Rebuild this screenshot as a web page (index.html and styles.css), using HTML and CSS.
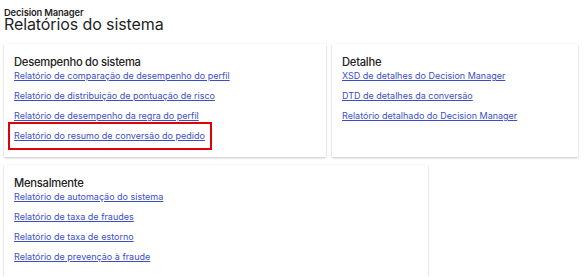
FILE: index.html
```html
<!DOCTYPE html>
<html lang="pt">
<head>
<meta charset="utf-8">
<link rel="stylesheet" href="styles.css">
</head>
<body>
<header class="page-header">
  <div class="app-name">Decision Manager</div>
  <h1 class="page-title">Relatórios do sistema</h1>
</header>
<main class="cards">
  <section class="card card-perf">
    <h2 class="card-title">Desempenho do sistema</h2>
    <ul class="links">
      <li><a href="#">Relatório de comparação de desempenho do perfil</a></li>
      <li><a href="#">Relatório de distribuição de pontuação de risco</a></li>
      <li><a href="#">Relatório de desempenho da regra do perfil</a></li>
      <li class="highlight"><a href="#">Relatório do resumo de conversão do pedido</a></li>
    </ul>
  </section>
  <section class="card card-detail">
    <h2 class="card-title">Detalhe</h2>
    <ul class="links">
      <li><a href="#">XSD de detalhes do Decision Manager</a></li>
      <li><a href="#">DTD de detalhes da conversão</a></li>
      <li><a href="#">Relatório detalhado do Decision Manager</a></li>
    </ul>
  </section>
  <section class="card card-monthly">
    <h2 class="card-title">Mensalmente</h2>
    <ul class="links">
      <li><a href="#">Relatório de automação do sistema</a></li>
      <li><a href="#">Relatório de taxa de fraudes</a></li>
      <li><a href="#">Relatório de taxa de estorno</a></li>
      <li><a href="#">Relatório de prevenção à fraude</a></li>
    </ul>
  </section>
</main>
</body>
</html>
```
FILE: styles.css
```css
html, body {
  margin: 0;
  padding: 0;
  background: #ffffff;
}
body {
  font-family: Inter, "Noto Sans", sans-serif;
  color: #1f1f1f;
  padding: 8px 4px 0 4px;
  overflow: hidden;
}
.page-header {
  margin-bottom: 14px;
}
.app-name {
  font-size: 9.4px;
  font-weight: 600;
  line-height: 10px;
  letter-spacing: -0.15px;
}
.page-title {
  margin: 0;
  font-size: 16px;
  font-weight: 400;
  line-height: 12px;
  letter-spacing: -0.1px;
}
.cards {
  display: flex;
  flex-wrap: wrap;
  gap: 8px 6px;
  width: 580px;
}
.card {
  background: #fff;
  box-shadow: 0 1px 2px rgba(0, 0, 0, 0.22), 0 0 1px rgba(0, 0, 0, 0.08);
  padding: 11px 10px 0 10px;
  box-sizing: border-box;
}
.card-perf { width: 322px; height: 113px; }
.card-detail { width: 246px; height: 113px; }
.card-monthly { width: 424px; height: 111px; }
.card-title {
  margin: 0;
  font-size: 11.2px;
  font-weight: 500;
  line-height: 15px;
  letter-spacing: -0.25px;
  color: #222;
}
.links {
  list-style: none;
  margin: 0;
  padding: 0;
  display: flex;
  flex-direction: column;
  gap: 8px;
}
.links li {
  line-height: 12px;
  font-size: 9px;
}
.links a {
  color: #3d4fc4;
  text-decoration: underline;
  text-underline-offset: 1px;
}
.highlight {
  align-self: flex-start;
  outline: 2px solid #e0000a;
  outline-offset: 0;
  padding: 6px 5px 6px 4px;
  margin: -6px 0 -6px -4px;
}
```
